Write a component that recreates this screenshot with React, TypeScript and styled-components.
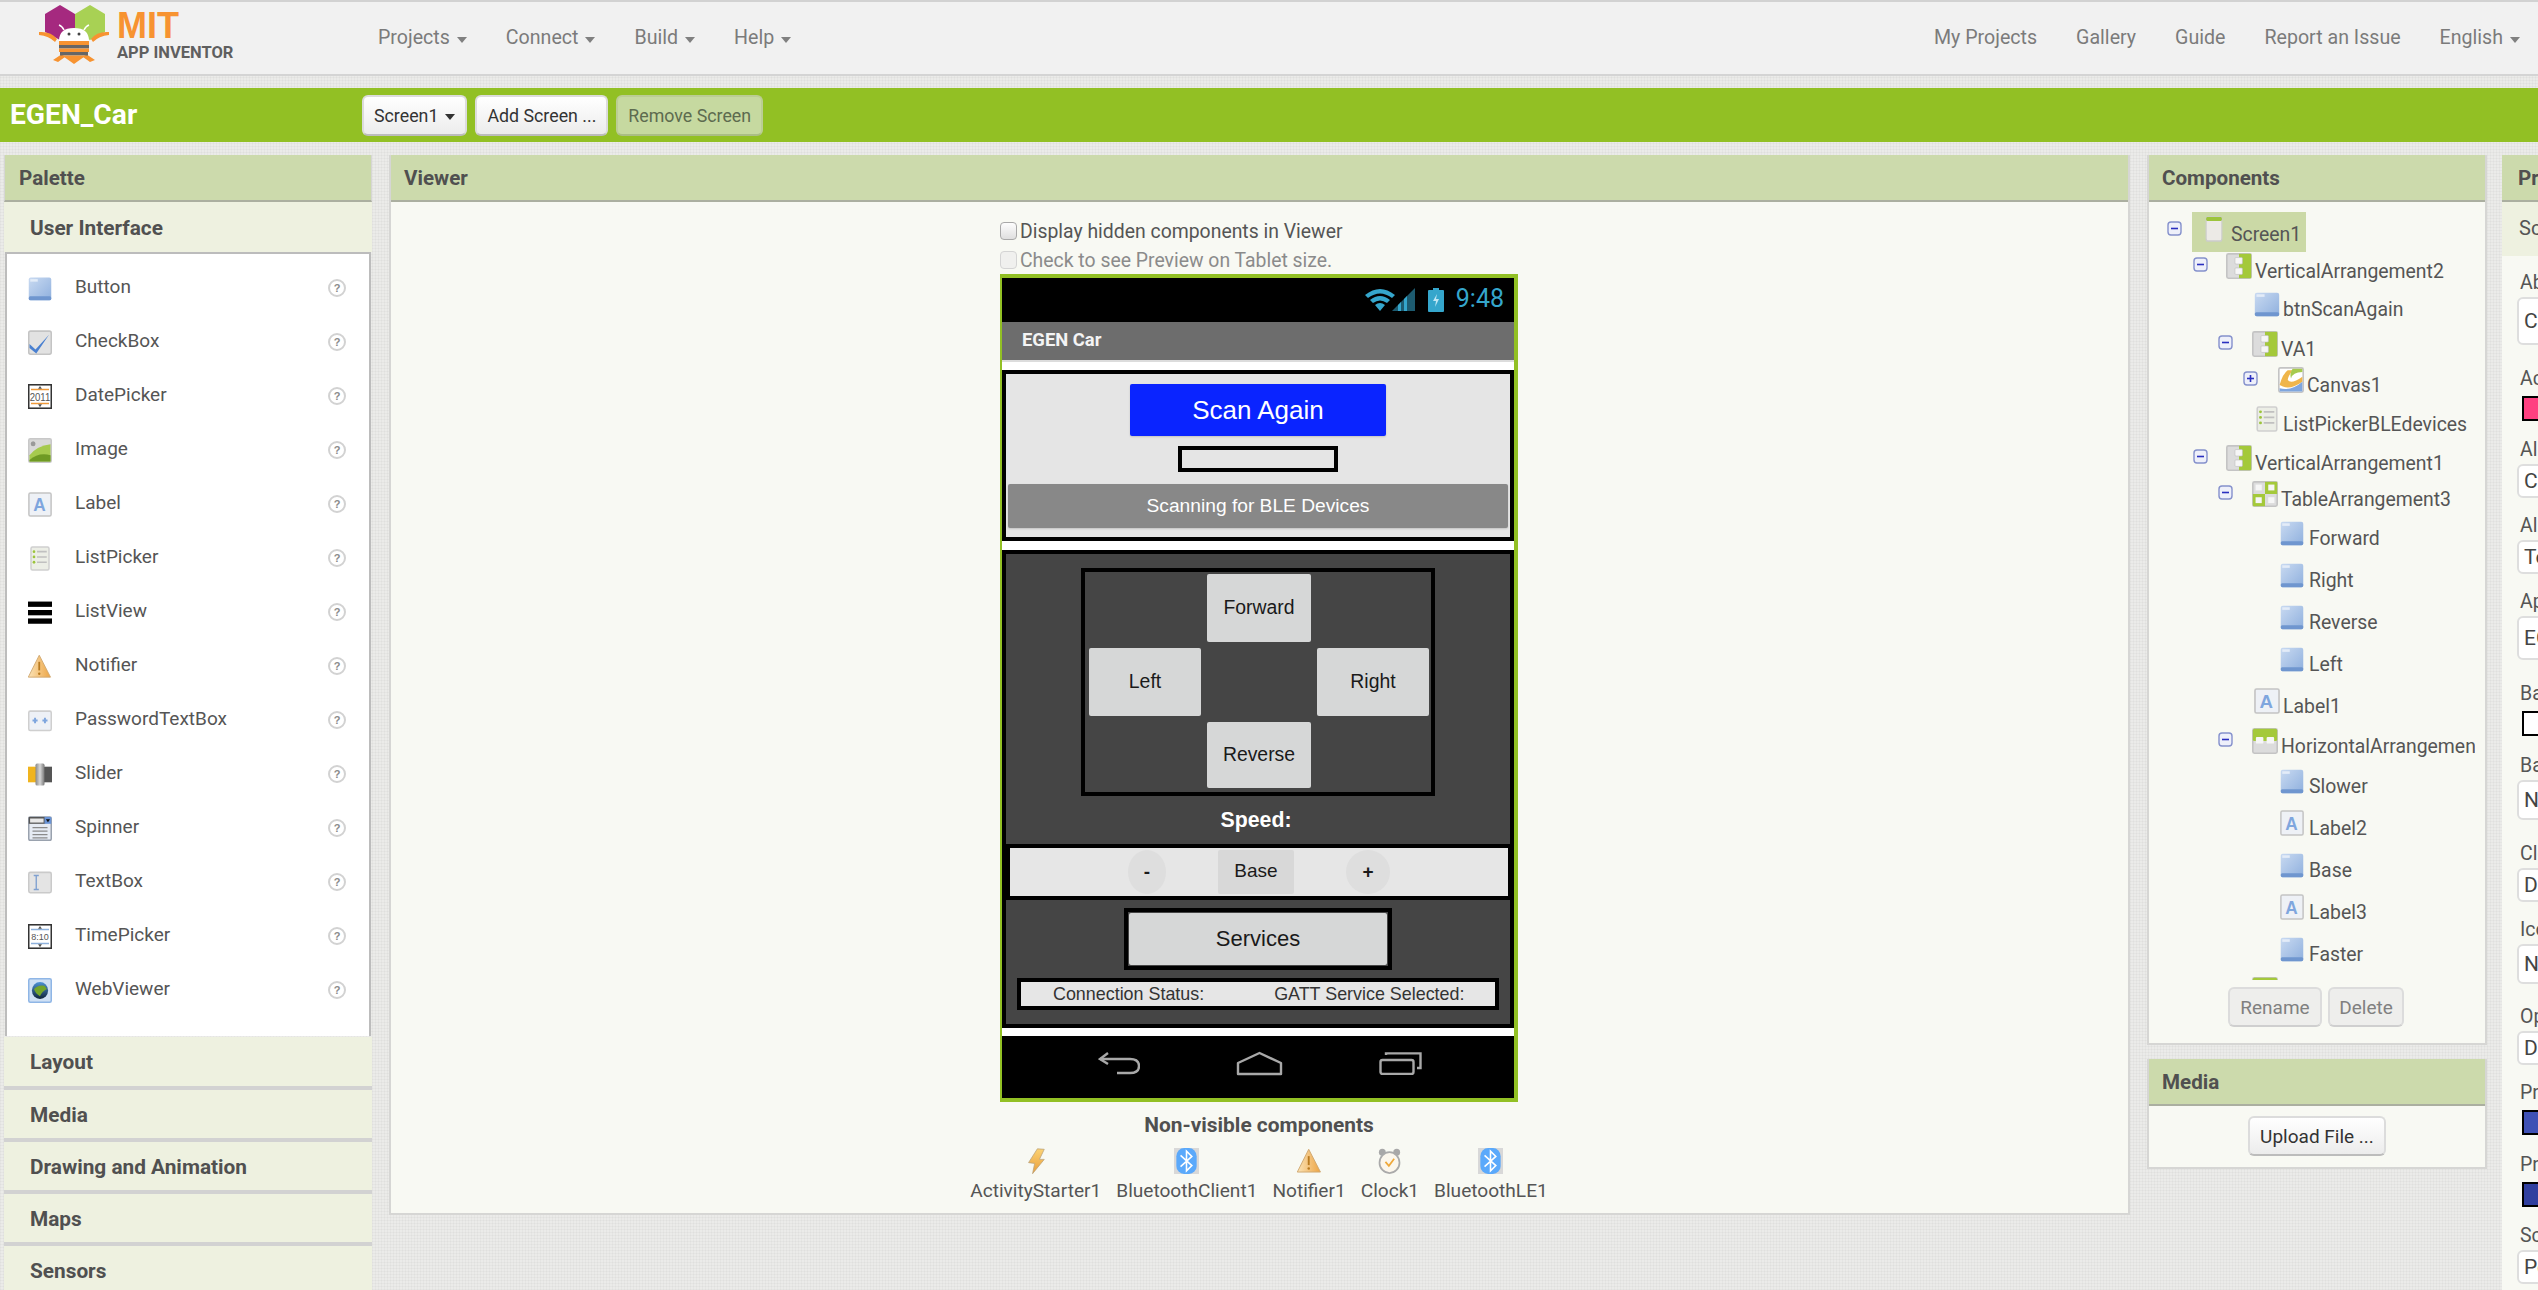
import React from "react";
import styled, { createGlobalStyle } from "styled-components";

const Global = createGlobalStyle`
  html, body { margin: 0; padding: 0; width: 2538px; height: 1290px; overflow: hidden; }
  body { font-family: Roboto, "Liberation Sans", sans-serif; color: #555; }
  *, *::before, *::after { box-sizing: border-box; }
`;

const Page = styled.div`
  width: 2538px; height: 1290px; overflow: hidden; display: flex; flex-direction: column;
  background-color: #ebebe9;
  background-image:
    repeating-linear-gradient(0deg, rgba(0,0,0,.028) 0 1px, transparent 1px 3px),
    repeating-linear-gradient(90deg, rgba(0,0,0,.028) 0 1px, transparent 1px 3px);
`;
const GradientDefs = styled.svg` position: absolute; width: 0; height: 0; `;

/* ---------- top bar ---------- */
const TopBar = styled.header`
  height: 76px; flex: none; display: flex; align-items: center; background: #f1f1f1;
  border-top: 2px solid #d2d2d2; border-bottom: 2px solid #d4d4d4; padding-left: 39px; padding-right: 18px;
`;
const Logo = styled.div` width: 339px; flex: none; display: flex; align-items: flex-start; height: 62px; margin-top: -6px; `;
const LogoWords = styled.div` margin-left: 8px; display: flex; flex-direction: column; `;
const LogoMit = styled.span`
  font: 700 36px/30px "Liberation Sans", sans-serif; color: #f79331; margin-top: 7px; height: 32px;
`;
const LogoApp = styled.span`
  font: 700 16.5px/18px Roboto, sans-serif; color: #5f5f5f; white-space: nowrap; margin-top: 1px;
`;
const NavGroup = styled.nav<{ $right?: boolean }>`
  display: flex; align-items: center; gap: 39px; margin-left: ${p => (p.$right ? "auto" : "0")};
`;
const NavItem = styled.span`
  font-size: 19.6px; color: #7b7b7b; display: flex; align-items: center; white-space: nowrap; line-height: 26px;
`;
const Caret = styled.i<{ $color?: string }>`
  display: inline-block; width: 0; height: 0; margin-left: 7px; margin-top: 3px;
  border-left: 5px solid transparent; border-right: 5px solid transparent; border-top: 6px solid ${p => p.$color || "#808080"};
`;

/* ---------- green project bar ---------- */
const ProjectBar = styled.div`
  height: 54px; flex: none; margin-top: 12px; background: #92c024; display: flex; align-items: center; padding-left: 10px;
`;
const ProjectTitle = styled.h1`
  margin: 0; width: 352px; font-size: 28.2px; font-weight: 700; color: #fff; line-height: 32px; white-space: nowrap;
`;
const BarButtons = styled.div` display: flex; gap: 8px; `;
const ToolButton = styled.button<{ $muted?: boolean }>`
  height: 41px; padding: 0 10px; font: 400 17.8px Roboto, sans-serif; border-radius: 6px; display: flex; align-items: center;
  border: 2px solid ${p => (p.$muted ? "#bbcd94" : "#dcdcdc")}; border-bottom-color: ${p => (p.$muted ? "#aabd85" : "#bcbcbc")};
  background: ${p => (p.$muted ? "#c6d9a0" : "linear-gradient(#ffffff, #ececec)")};
  color: ${p => (p.$muted ? "#5d6b4f" : "#333")};
`;

/* ---------- workspace columns ---------- */
const Workspace = styled.main`
  flex: 1; display: flex; align-items: flex-start; margin-top: 13px; padding-left: 4px; overflow: hidden; min-height: 0;
`;
const PaletteColumn = styled.section` width: 368px; flex: none; margin-right: 17px; `;
const ViewerColumn = styled.section` width: 1741px; height: 1060px; flex: none; margin-right: 17px; background: #f8f9f3; border: 2px solid #d6d6d4; border-top: none; `;
const SideColumn = styled.div` width: 340px; flex: none; margin-right: 15px; display: flex; flex-direction: column; gap: 14px; `;
const PropertiesColumn = styled.section` width: 400px; flex: none; height: 1160px; background: #f8f9f3; `;
const Panel = styled.section<{ $height: number }>`
  height: ${p => p.$height}px; background: #f8f9f3; border: 2px solid #d6d6d4; border-top: none; display: flex; flex-direction: column;
`;
const PanelHeader = styled.h2`
  margin: 0; height: 47px; flex: none; background: #ccdaac; border-bottom: 2px solid #abafa0; padding-left: 13px;
  font-size: 20.6px; font-weight: 700; color: #505050; line-height: 47px; white-space: nowrap;
`;
const PaletteHeader = styled(PanelHeader)` padding-left: 14px; border-left: 1px solid #d6d6d4; border-right: 1px solid #d6d6d4; `;
const PropertiesHeader = styled(PanelHeader)` padding-left: 16px; `;
const Drawer = styled.div<{ $open?: boolean }>`
  height: ${p => (p.$open ? 50 : 52)}px; background: #eef1e0; font-size: 20.8px; font-weight: 700; color: #505050;
  padding-left: 26px; line-height: ${p => (p.$open ? 53 : 51)}px; white-space: nowrap; border-bottom: ${p => (p.$open ? "0" : "4px solid #d2d2d2")};
`;
const FirstClosedDrawer = styled(Drawer)` margin-top: 1px; height: 53px; `;

const PaletteList = styled.div`
  width: 366px; height: 784px; margin: 0 auto; padding-top: 7px; background: #fff;
  border: 2px solid #bcbcbc; border-bottom: none;
`;
const PaletteRow = styled.div`
  height: 54px; display: flex; align-items: center; padding: 0 23px 0 21px; font-size: 19px; color: #555; line-height: 24px;
`;
const PaletteName = styled.span` margin-left: 23px; flex: 1; margin-top: -3px; `;
const HelpBadge = styled.span`
  width: 18px; height: 18px; border: 2px solid #d2d2d2; border-radius: 50%; font: 700 11px/14px "Liberation Sans", sans-serif;
  color: #8a8a8a; text-align: center; flex: none;
`;

/* ---------- viewer ---------- */
const ViewerBody = styled.div` display: flex; flex-direction: column; align-items: center; padding: 14px 1px 0 0; `;
const CheckRow = styled.label<{ $dim?: boolean; $h: number }>`
  width: 518px; height: ${p => p.$h}px; display: flex; align-items: center; font-size: 19.4px; white-space: nowrap;
  color: ${p => (p.$dim ? "#8b8b8b" : "#555")};
`;
const FakeCheck = styled.span<{ $dim?: boolean }>`
  width: 17px; height: 18px; margin-right: 3px; border-radius: 4px; flex: none;
  border: 1px solid ${p => (p.$dim ? "#d4d4d4" : "#a8a8a8")};
  background: ${p => (p.$dim ? "#f0f0ee" : "linear-gradient(#fdfdfd, #dfdfdf)")};
`;
const Phone = styled.div`
  width: 518px; height: 828px; flex: none; border: solid #92c024; border-width: 4px 4px 4px 2px; background: #fff;
  font-family: "Liberation Sans", Arial, sans-serif; display: flex; flex-direction: column;
`;
const StatusBar = styled.div` height: 44px; flex: none; background: #000; display: flex; align-items: center; justify-content: flex-end; padding-right: 10px; `;
const Clock = styled.span` font: 400 25px/28px Roboto, sans-serif; color: #35a6cc; margin: -3px 0 0 12px; `;
const PhoneTitle = styled.div`
  height: 40px; flex: none; background: #6d6d6d; border-bottom: 2px solid #dcdcdc; padding-left: 20px;
  font: 700 18.4px/36px Roboto, sans-serif; color: #f4f4f4;
`;
const Arrangement = styled.div<{ $dark?: boolean; $height: number; $top: number }>`
  height: ${p => p.$height}px; margin-top: ${p => p.$top}px; flex: none; border: 4px solid #000; display: flex; flex-direction: column; align-items: center;
  background: ${p => (p.$dark ? "#454545" : "#e5e5e5")};
`;
const ScanButton = styled.div`
  width: 256px; height: 52px; margin-top: 10px; background: #0a24ff; border-radius: 2px; color: #fff;
  font-size: 26px; display: flex; align-items: center; justify-content: center; box-shadow: 0 1px 2px rgba(0,0,0,.15);
`;
const EmptyLabel = styled.div` width: 160px; height: 26px; margin-top: 10px; border: 4px solid #000; `;
const StatusButton = styled.div`
  width: 500px; height: 44px; margin-top: 12px; background: #888; border-radius: 2px; color: #fff; font-size: 19.2px;
  display: flex; align-items: center; justify-content: center; box-shadow: 0 1px 2px rgba(0,0,0,.15);
`;
const ControlTable = styled.div`
  width: 354px; height: 228px; margin-top: 14px; border: 4px solid #000; padding: 2px 2px 4px 4px; flex: none;
  display: grid; grid-template-columns: 112px 104px 112px; grid-template-rows: 68px 68px 66px; column-gap: 6px; row-gap: 6px;
`;
const CarButton = styled.div<{ $col: number; $row: number }>`
  grid-column: ${p => p.$col}; grid-row: ${p => p.$row}; background: #d6d7d7; border-radius: 2px; color: #1a1a1a; font-size: 19.4px;
  display: flex; align-items: center; justify-content: center; padding-bottom: 2px;
`;
const SpeedTitle = styled.div`
  height: 48px; flex: none; display: flex; align-items: center; color: #fff; font-weight: 700; font-size: 21.3px; padding-right: 4px;
`;
const SpeedRow = styled.div`
  width: 504px; height: 56px; flex: none; border: solid #000; border-width: 4px 2px 4px 4px; background: #e6e6e6;
  display: flex; align-items: center; padding-left: 118px; gap: 52px;
`;
const RoundButton = styled.div<{ $w: number }>`
  width: ${p => p.$w}px; height: 44px; border-radius: 50%; background: #dedede; color: #1a1a1a; font-weight: 700; font-size: 19px;
  display: flex; align-items: center; justify-content: center;
`;
const BaseButton = styled.div`
  width: 76px; height: 44px; border-radius: 2px; background: #d8d8d8; color: #1a1a1a; font-size: 19px;
  display: flex; align-items: center; justify-content: center; padding-bottom: 3px;
`;
const ServicesFrame = styled.div` width: 268px; height: 62px; margin-top: 8px; border: 4px solid #000; padding: 1px; flex: none; `;
const ServicesButton = styled.div`
  height: 100%; background: #d6d7d7; border-radius: 2px; color: #1a1a1a; font-size: 22px;
  display: flex; align-items: center; justify-content: center;
`;
const ConnectionRow = styled.div`
  width: 482px; height: 32px; margin-top: 8px; flex: none; border: 4px solid #000; background: #e6e6e6; color: #333; font-size: 17.9px;
  display: flex; align-items: center; padding-left: 32px; gap: 70px; white-space: nowrap;
`;
const NavBar = styled.div`
  height: 62px; margin-top: 8px; flex: none; background: #000; display: flex; align-items: flex-start; padding: 15px 0 0 96px; gap: 96px;
`;
const HiddenTitle = styled.div` margin-top: 11px; font-size: 20.9px; font-weight: 700; color: #505050; line-height: 24px; `;
const HiddenRow = styled.div` display: flex; gap: 15px; margin-top: 11px; `;
const HiddenItem = styled.div` display: flex; flex-direction: column; align-items: center; font-size: 19.1px; color: #555; line-height: 24px; gap: 5px; white-space: nowrap; `;

/* ---------- components tree ---------- */
const TreeArea = styled.div` width: 326px; height: 778px; flex: none; overflow: hidden; padding-top: 10px; `;
const TreeRow = styled.div<{ $h: number; $indent: number }>`
  height: ${p => p.$h}px; padding-left: ${p => p.$indent}px; display: flex; align-items: flex-start; white-space: nowrap;
`;
const Toggle = styled.span<{ $slot: number; $top: number }>`
  width: ${p => p.$slot}px; flex: none; padding-top: ${p => p.$top}px; display: block; line-height: 0;
`;
const TreeName = styled.span<{ $gap: number }>` font-size: 19.4px; color: #555; line-height: 24px; margin-top: 7px; margin-left: ${p => p.$gap}px; `;
const Selected = styled.div`
  width: 114px; height: 40px; background: #cbd9a6; display: flex; align-items: flex-start; padding: 4px 0 0 13px;
`;
const PanelActions = styled.div` display: flex; justify-content: center; gap: 6px; margin-top: 7px; padding-right: 2px; `;
const GreyButton = styled.button<{ $w: number }>`
  width: ${p => p.$w}px; height: 40px; padding: 0; border-radius: 6px; font: 400 19px Roboto, sans-serif; color: #808080;
  background: #eeeeec; border: 2px solid #dcdcdc; border-bottom-color: #cfcfcf;
`;
const MediaBody = styled.div` display: flex; justify-content: center; padding-top: 10px; `;
const UploadButton = styled.button`
  width: 138px; height: 40px; border-radius: 6px; font: 400 19px Roboto, sans-serif; color: #333; white-space: nowrap; padding: 0;
  background: linear-gradient(#ffffff, #ececec); border: 2px solid #dcdcdc; border-bottom-color: #bcbcbc;
`;

/* ---------- properties ---------- */
const PropertySubHeader = styled.div`
  height: 54px; background: #eef1e0; padding-left: 17px; font-size: 20px; line-height: 52px; color: #555; white-space: nowrap;
`;
const PropertyList = styled.div` padding: 13px 0 0 15px; `;
const Property = styled.div<{ $after: number }>` margin-bottom: ${p => p.$after}px; `;
const PropertyLabel = styled.div<{ $swatch?: boolean }>`
  height: 28px; margin-bottom: ${p => (p.$swatch ? 3 : 0)}px; padding-left: 3px; font-size: 19.5px; line-height: 28px; color: #555; white-space: nowrap;
`;
const PropertyInput = styled.div<{ $h: number }>`
  width: 200px; height: ${p => p.$h}px; border: 2px solid #dedede; border-radius: 6px; background: #fff; padding-left: 5px;
  font-size: 21px; color: #444; display: flex; align-items: center; white-space: nowrap;
`;
const Swatch = styled.div<{ $color: string }>`
  width: 200px; height: 25px; margin-left: 5px; border: 2px solid #000; background: ${p => p.$color};
`;

/* ---------- drawings ---------- */
type Kind =
  | "button" | "checkbox" | "date" | "image" | "label" | "listpicker" | "listview" | "notifier" | "password"
  | "slider" | "spinner" | "textbox" | "time" | "web" | "screen" | "vertical" | "horizontal" | "table" | "canvas"
  | "lightning" | "bluetooth" | "clock";

const Icon: React.FC<{ kind: Kind; size?: number; h?: number }> = ({ kind, size = 24, h }) => {
  const shapes: Record<Kind, React.ReactNode> = {
    button: <>
      <rect x=".5" y="1" width="15" height="14.5" rx="1.3" fill="url(#gBtn)" />
      <rect x=".5" y="13" width="15" height="2.5" rx="1" fill="#6f96cf" />
      <rect x="1.5" y="2" width="5" height="1.6" fill="#e3ecf8" />
    </>,
    checkbox: <>
      <rect x=".5" y=".7" width="15" height="14.8" rx="1.2" fill="#e2e2e2" stroke="#c4c4c4" />
      <path d="M1 9 L5 12.5 L14 3 L5.5 15 L1 11.5 Z" fill="#4a80d0" />
    </>,
    date: <>
      <rect x=".5" y=".5" width="15" height="15" fill="#fff" stroke="#333" />
      <path d="M2 3.5h12M2 12.5h12" stroke="#ef9a3c" strokeWidth="1" />
      <path d="M8 1.2 L9.3 3 H6.7Z M8 14.8 L9.3 13 H6.7Z" fill="#555" />
      <text x="8" y="10.6" textAnchor="middle" fontSize="6.4" fontFamily="Liberation Sans, sans-serif" fill="#555">2011</text>
    </>,
    image: <>
      <rect x=".5" y=".5" width="15" height="15" rx="1" fill="#d9d9d9" stroke="#c8c8c8" />
      <circle cx="3.4" cy="3.6" r="1.6" fill="#9a9a9a" />
      <path d="M1 11 Q6 5 15 4 V15 H1Z" fill="#a6ca4e" />
      <path d="M1 14 Q7 9 15 11 V15 H1Z" fill="#6f9a24" />
    </>,
    label: <>
      <rect x=".6" y=".6" width="14.8" height="14.8" rx="1" fill="#eef1f6" stroke="#c4c4c4" />
      <text x="7.6" y="12.4" textAnchor="middle" fontSize="11.5" fontWeight="700" fontFamily="Liberation Sans, sans-serif" fill="#7fa6de">A</text>
    </>,
    listpicker: <>
      <rect x="2" y=".6" width="12" height="14.8" rx="1" fill="#eceee6" stroke="#cfcfcf" />
      <circle cx="4" cy="3.6" r=".9" fill="#9cc43c" /><circle cx="4" cy="7" r=".9" fill="#9cc43c" /><circle cx="4" cy="10.4" r=".9" fill="#9cc43c" />
      <path d="M6 3.6h6.5M6 7h6.5M6 10.4h6.5" stroke="#c0c0c0" strokeWidth="1" />
    </>,
    listview: <>
      <rect x="0" y="1" width="16" height="3.4" fill="#000" /><rect x="0" y="6.4" width="16" height="3.4" fill="#000" /><rect x="0" y="11.8" width="16" height="3.4" fill="#000" />
    </>,
    notifier: <>
      <path d="M7.5 .8 L15 14.8 H.2Z" fill="url(#gWarn)" stroke="#d0a870" strokeWidth=".6" />
      <path d="M7.5 5v5.5" stroke="#b87a20" strokeWidth="1.2" /><circle cx="7.5" cy="12.6" r=".8" fill="#b87a20" />
    </>,
    password: <>
      <rect x=".5" y="2" width="15" height="12.4" rx="1" fill="#eef1f6" stroke="#cfcfcf" />
      <path d="M3 8h3.4M4.7 6.3v3.4M9.6 8H13M11.3 6.3v3.4" stroke="#7fa6de" strokeWidth="1.3" />
    </>,
    slider: <>
      <rect x="0" y="3" width="6" height="10" fill="#f0b41e" /><rect x="10" y="3" width="6" height="10" fill="#555" />
      <rect x="5" y="1" width="6" height="14" rx="1" fill="url(#gKnob)" />
    </>,
    spinner: <>
      <rect x=".5" y=".6" width="15" height="15" rx="1" fill="#e6ebf3" stroke="#9aa2ae" />
      <rect x=".5" y=".6" width="11" height="4.4" fill="#555" />
      <rect x="1.4" y="1.6" width="9" height="2.6" fill="#e8e8e8" />
      <rect x="11" y=".6" width="4.5" height="4.4" fill="#6a94d6" />
      <path d="M11.9 2h2.8L13.3 4Z" fill="#111" />
      <path d="M3 7.5h10M3 9.7h10M3 11.9h10M3 14h10" stroke="#8a8a8a" strokeWidth=".8" />
    </>,
    textbox: <>
      <rect x=".5" y="1.5" width="15" height="13" rx="1" fill="#e4e4e4" stroke="#cacaca" />
      <path d="M3.8 3.5h3.4M3.8 12.5h3.4M5.5 3.5v9" stroke="#7fa0d0" strokeWidth=".9" />
    </>,
    time: <>
      <rect x=".5" y=".5" width="15" height="15" fill="#fff" stroke="#333" />
      <path d="M2 3.5h12M2 12.5h12" stroke="#8fb2dd" strokeWidth="1" />
      <path d="M8 1.2 L9.3 3 H6.7Z M8 14.8 L9.3 13 H6.7Z" fill="#555" />
      <text x="8" y="10.4" textAnchor="middle" fontSize="6" fontFamily="Liberation Sans, sans-serif" fill="#555">8:10</text>
    </>,
    web: <>
      <rect x=".5" y=".5" width="15" height="15" rx="1" fill="#cfe0f4" stroke="#8fb6e6" />
      <circle cx="8" cy="8" r="5.4" fill="url(#gGlobe)" />
      <path d="M4 7 Q7 4 11 5 L12.6 7 Q9 9 8 11.6 Q5 10 4 7Z" fill="#74a52a" />
    </>,
    screen: <>
      <rect x="1" y=".6" width="14" height="14.8" rx="1.4" fill="#eceae6" stroke="#cccccc" />
      <rect x="1" y=".6" width="14" height="2.4" rx="1" fill="#9cc43c" />
    </>,
    vertical: <>
      <rect x=".5" y=".5" width="15" height="15" rx="1" fill="#dcdcdc" stroke="#c4c4c4" />
      <rect x="8" y=".5" width="7.5" height="15" fill="#a4c93a" />
      <rect x="5.5" y="2.8" width="4.6" height="4" rx=".6" fill="#f6f6f6" stroke="#c0c0c0" strokeWidth=".4" />
      <rect x="5.5" y="9.2" width="4.6" height="4" rx=".6" fill="#f6f6f6" stroke="#c0c0c0" strokeWidth=".4" />
    </>,
    horizontal: <>
      <rect x=".5" y=".5" width="15" height="15" rx="1" fill="#dcdcdc" stroke="#c4c4c4" />
      <rect x=".5" y=".5" width="15" height="7.5" rx="1" fill="#a4c93a" />
      <rect x="2.4" y="5.6" width="4.6" height="4" rx=".6" fill="#f6f6f6" />
      <rect x="9" y="5.6" width="4.6" height="4" rx=".6" fill="#f6f6f6" />
    </>,
    table: <>
      <rect x=".5" y=".5" width="15" height="15" rx="1" fill="#dcdcdc" stroke="#c4c4c4" />
      <rect x="8" y=".5" width="7.5" height="7.5" fill="#a4c93a" /><rect x=".5" y="8" width="7.5" height="7.5" fill="#a4c93a" />
      <rect x="2.2" y="2.2" width="3.8" height="3.6" fill="#f6f6f6" /><rect x="10" y="2.2" width="3.8" height="3.6" fill="#f6f6f6" />
      <rect x="2.2" y="10" width="3.8" height="3.6" fill="#f6f6f6" /><rect x="10" y="10" width="3.8" height="3.6" fill="#f6f6f6" />
    </>,
    canvas: <>
      <rect x=".5" y=".5" width="15" height="15" rx="1" fill="#fff" stroke="#c4c4c4" />
      <path d="M1 11 Q3 4 6 2 H9 Q6 6 6 8 Q8 11 15 6 V9 Q8 14 3 12 Z" fill="#efb54a" />
      <path d="M9 1 H15 V3 Q9 3 8 7 Q7 4 9 1Z" fill="#a6ca4e" />
      <path d="M1 13 Q8 15 15 9 V15 H1Z" fill="#7fa6de" />
    </>,
    lightning: <>
      <path d="M9 .5 L14 .8 L10.5 7 L14 7 L5.5 15.8 L7 9.5 L2.6 9 Z" fill="url(#gBolt)" stroke="#b9a27a" strokeWidth=".5" />
    </>,
    bluetooth: <>
      <rect x="0" y="0" width="16" height="16" fill="#d8d8d8" />
      <rect x="1.5" y="0" width="13" height="16" rx="5" fill="#5aa9fb" />
      <path d="M4.2 4.6 L11.4 10.8 L8 14 V2 L11.4 5.2 L4.2 11.4" fill="none" stroke="#fff" strokeWidth="1" />
    </>,
    clock: <>
      <circle cx="3.4" cy="2.6" r="2.2" fill="#a8a8a8" /><circle cx="12.6" cy="2.6" r="2.2" fill="#a8a8a8" />
      <circle cx="8" cy="9" r="6.4" fill="#fbf6ec" stroke="#aaa" strokeWidth="1.1" />
      <path d="M5.4 8.6 L7.6 11 L11 6.6" fill="none" stroke="#efa83a" strokeWidth="1.1" />
    </>,
  };
  return <svg width={size} height={h ?? size} viewBox="0 0 16 16" preserveAspectRatio="none" style={{ flex: "none" }}>{shapes[kind]}</svg>;
};

const TreeSign: React.FC<{ plus?: boolean }> = ({ plus }) => (
  <svg width="15" height="15" viewBox="0 0 15 15">
    <rect x="1" y="1" width="13" height="13" rx="3" fill="#eef0fa" stroke="#8591cc" strokeWidth="1.4" />
    <path d="M4 7.5h7" stroke="#2a2fc0" strokeWidth="1.6" />
    {plus && <path d="M7.5 4v7" stroke="#2a2fc0" strokeWidth="1.6" />}
  </svg>
);

const Bee = () => (
  <svg width="70" height="60" viewBox="0 0 70 60" style={{ flex: "none" }}>
    <path d="M6 10 L21 1 L36 10 V28 L21 36 L6 28Z" fill="#a5297f" />
    <path d="M36 10 L51 1 L66 10 V28 L51 36 L36 28Z" fill="#a8d154" />
    <path d="M0 28 Q12 27 18 35 L16 38 Q10 32 0 31Z M70 28 Q58 27 52 35 L54 38 Q60 32 70 31Z" fill="#f79331" />
    <path d="M14 56 L23 50 L26 53 L19 58Z M56 56 L47 50 L44 53 L51 58Z" fill="#f79331" />
    <path d="M25 26 Q23 22 20 21 M45 26 Q47 22 50 21" stroke="#fff" strokeWidth="1.6" fill="none" />
    <path d="M20 37 Q20 24 35 24 Q50 24 50 37Z" fill="#fff" />
    <circle cx="30" cy="30" r="1.5" fill="#444" /><circle cx="40" cy="30" r="1.5" fill="#444" />
    <path d="M20 37 H50 L50 41 H20Z" fill="#f79331" />
    <rect x="20" y="41" width="30" height="3.5" fill="#666" />
    <rect x="20" y="44.5" width="30" height="3.5" fill="#f79331" />
    <rect x="21" y="48" width="28" height="3.5" fill="#666" />
    <path d="M23 51.5 H47 L35 60Z" fill="#f79331" />
  </svg>
);

const paletteItems: [string, Kind][] = [
  ["Button", "button"], ["CheckBox", "checkbox"], ["DatePicker", "date"], ["Image", "image"], ["Label", "label"],
  ["ListPicker", "listpicker"], ["ListView", "listview"], ["Notifier", "notifier"], ["PasswordTextBox", "password"],
  ["Slider", "slider"], ["Spinner", "spinner"], ["TextBox", "textbox"], ["TimePicker", "time"], ["WebViewer", "web"],
];

type Node = { name: string; kind: Kind; h: number; indent: number; slot: number; sign?: "minus" | "plus"; size?: number };
const tree: Node[] = [
  { name: "VerticalArrangement2", kind: "vertical", h: 38, indent: 44, slot: 33, sign: "minus" },
  { name: "btnScanAgain", kind: "button", h: 40, indent: 69, slot: 36 },
  { name: "VA1", kind: "vertical", h: 36, indent: 69, slot: 34, sign: "minus" },
  { name: "Canvas1", kind: "canvas", h: 39, indent: 94, slot: 35, sign: "plus" },
  { name: "ListPickerBLEdevices", kind: "listpicker", h: 39, indent: 69, slot: 36 },
  { name: "VerticalArrangement1", kind: "vertical", h: 36, indent: 44, slot: 33, sign: "minus" },
  { name: "TableArrangement3", kind: "table", h: 39, indent: 69, slot: 34, sign: "minus" },
  { name: "Forward", kind: "button", h: 42, indent: 94, slot: 37, size: 24 },
  { name: "Right", kind: "button", h: 42, indent: 94, slot: 37, size: 24 },
  { name: "Reverse", kind: "button", h: 42, indent: 94, slot: 37, size: 24 },
  { name: "Left", kind: "button", h: 42, indent: 94, slot: 37, size: 24 },
  { name: "Label1", kind: "label", h: 40, indent: 69, slot: 36 },
  { name: "HorizontalArrangemen", kind: "horizontal", h: 40, indent: 69, slot: 34, sign: "minus" },
  { name: "Slower", kind: "button", h: 42, indent: 94, slot: 37, size: 24 },
  { name: "Label2", kind: "label", h: 42, indent: 94, slot: 37, size: 24 },
  { name: "Base", kind: "button", h: 42, indent: 94, slot: 37, size: 24 },
  { name: "Label3", kind: "label", h: 42, indent: 94, slot: 37, size: 24 },
  { name: "Faster", kind: "button", h: 41, indent: 94, slot: 37, size: 24 },
  { name: "", kind: "horizontal", h: 40, indent: 69, slot: 34 },
];

type Prop = { label: string; value?: string; h?: number; color?: string; after: number };
const properties: Prop[] = [
  { label: "AboutScreen", value: "Controls", h: 48, after: 20 },
  { label: "AccentColor", color: "#ff4081", after: 15 },
  { label: "AlignHorizontal", value: "Center : 3", h: 34, after: 14 },
  { label: "AlignVertical", value: "Top : 1", h: 34, after: 14 },
  { label: "AppName", value: "EGEN_Car", h: 44, after: 20 },
  { label: "BackgroundColor", color: "#ffffff", after: 16 },
  { label: "BackgroundImage", value: "None...", h: 40, after: 20 },
  { label: "CloseScreenAnimation", value: "Default", h: 34, after: 14 },
  { label: "Icon", value: "None...", h: 40, after: 19 },
  { label: "OpenScreenAnimation", value: "Default", h: 34, after: 14 },
  { label: "PrimaryColor", color: "#3f51b5", after: 16 },
  { label: "PrimaryColorDark", color: "#303f9f", after: 15 },
  { label: "ScreenOrientation", value: "Portrait", h: 34, after: 14 },
];

const hiddenComponents: [string, Kind, number][] = [
  ["ActivityStarter1", "lightning", 22], ["BluetoothClient1", "bluetooth", 25], ["Notifier1", "notifier", 25],
  ["Clock1", "clock", 25], ["BluetoothLE1", "bluetooth", 25],
];

export default function App() {
  return (
    <Page>
      <Global />
      <GradientDefs aria-hidden="true">
        <defs>
          <linearGradient id="gBtn" x1="0" y1="0" x2="1" y2="1"><stop offset="0" stopColor="#c9daf1" /><stop offset="1" stopColor="#8fb0de" /></linearGradient>
          <linearGradient id="gWarn" x1="0" y1="0" x2="1" y2="0"><stop offset="0" stopColor="#fbe3b6" /><stop offset="1" stopColor="#eda545" /></linearGradient>
          <linearGradient id="gKnob" x1="0" y1="0" x2="1" y2="0"><stop offset="0" stopColor="#888" /><stop offset=".5" stopColor="#d6d6d6" /><stop offset="1" stopColor="#777" /></linearGradient>
          <linearGradient id="gGlobe" x1="0" y1="0" x2="0" y2="1"><stop offset="0" stopColor="#4f93d6" /><stop offset="1" stopColor="#10243a" /></linearGradient>
          <linearGradient id="gBolt" x1="0" y1="0" x2="0" y2="1"><stop offset="0" stopColor="#fbd274" /><stop offset="1" stopColor="#e99e3a" /></linearGradient>
        </defs>
      </GradientDefs>

      <TopBar>
        <Logo>
          <Bee />
          <LogoWords>
            <LogoMit>MIT</LogoMit>
            <LogoApp>APP INVENTOR</LogoApp>
          </LogoWords>
        </Logo>
        <NavGroup>
          {["Projects", "Connect", "Build", "Help"].map(n => <NavItem key={n}>{n}<Caret /></NavItem>)}
        </NavGroup>
        <NavGroup $right>
          <NavItem>My Projects</NavItem>
          <NavItem>Gallery</NavItem>
          <NavItem>Guide</NavItem>
          <NavItem>Report an Issue</NavItem>
          <NavItem>English<Caret /></NavItem>
        </NavGroup>
      </TopBar>

      <ProjectBar>
        <ProjectTitle>EGEN_Car</ProjectTitle>
        <BarButtons>
          <ToolButton>Screen1<Caret $color="#333" /></ToolButton>
          <ToolButton>Add Screen ...</ToolButton>
          <ToolButton $muted>Remove Screen</ToolButton>
        </BarButtons>
      </ProjectBar>

      <Workspace>
        <PaletteColumn>
          <PaletteHeader>Palette</PaletteHeader>
          <Drawer $open>User Interface</Drawer>
          <PaletteList>
            {paletteItems.map(([name, kind]) => (
              <PaletteRow key={name}>
                <Icon kind={kind} size={24} h={25} />
                <PaletteName>{name}</PaletteName>
                <HelpBadge>?</HelpBadge>
              </PaletteRow>
            ))}
          </PaletteList>
          <FirstClosedDrawer>Layout</FirstClosedDrawer>
          <Drawer>Media</Drawer>
          <Drawer>Drawing and Animation</Drawer>
          <Drawer>Maps</Drawer>
          <Drawer>Sensors</Drawer>
        </PaletteColumn>

        <ViewerColumn>
          <PanelHeader>Viewer</PanelHeader>
          <ViewerBody>
            <CheckRow $h={30}><FakeCheck />Display hidden components in Viewer</CheckRow>
            <CheckRow $h={28} $dim><FakeCheck $dim />Check to see Preview on Tablet size.</CheckRow>
            <Phone>
              <StatusBar>
                <svg width="50" height="24" viewBox="0 0 50 24">
                  <path d="M0 7 Q15 -5 30 7 L27 10 Q15 1 3 10Z M5 12 Q15 4 25 12 L22 15 Q15 10 8 15Z M10 17 Q15 13 20 17 L15 23Z" fill="#35a6cc" />
                  <path d="M27 23 L50 0 V23Z" fill="#35a6cc" opacity=".55" />
                  <path d="M33 23 V17 L36 14 V23Z M39 23 V11 L42 8 V23Z" fill="#35a6cc" />
                </svg>
                <svg width="16" height="24" viewBox="0 0 16 24" style={{ marginLeft: 13 }}>
                  <rect x="5" y="0" width="6" height="3" fill="#35a6cc" />
                  <rect x="0" y="2" width="16" height="22" rx="1" fill="#35a6cc" />
                  <path d="M9 6 L5 13 H8 L7 19 L11 11 H8Z" fill="#bfe6f3" />
                </svg>
                <Clock>9:48</Clock>
              </StatusBar>
              <PhoneTitle>EGEN Car</PhoneTitle>
              <Arrangement $height={171} $top={8}>
                <ScanButton>Scan Again</ScanButton>
                <EmptyLabel />
                <StatusButton>Scanning for BLE Devices</StatusButton>
              </Arrangement>
              <Arrangement $dark $height={478} $top={9}>
                <ControlTable>
                  <CarButton $col={2} $row={1}>Forward</CarButton>
                  <CarButton $col={1} $row={2}>Left</CarButton>
                  <CarButton $col={3} $row={2}>Right</CarButton>
                  <CarButton $col={2} $row={3}>Reverse</CarButton>
                </ControlTable>
                <SpeedTitle>Speed:</SpeedTitle>
                <SpeedRow>
                  <RoundButton $w={38}>-</RoundButton>
                  <BaseButton>Base</BaseButton>
                  <RoundButton $w={44}>+</RoundButton>
                </SpeedRow>
                <ServicesFrame><ServicesButton>Services</ServicesButton></ServicesFrame>
                <ConnectionRow><span>Connection Status:</span><span>GATT Service Selected:</span></ConnectionRow>
              </Arrangement>
              <NavBar>
                <svg width="42" height="24" viewBox="0 0 42 24" fill="none" stroke="#a8a8a8" strokeWidth="2.4">
                  <path d="M10 2 L2 8 L10 13" /><path d="M2 8 H32 Q41 8 41 15 Q41 22 32 22 H19" />
                </svg>
                <svg width="47" height="25" viewBox="0 0 47 25" fill="none" stroke="#a8a8a8" strokeWidth="2.4">
                  <path d="M2 23 V12 L23.5 2 L45 12 V23 Z" strokeLinejoin="round" />
                </svg>
                <svg width="43" height="24" viewBox="0 0 43 24" fill="none" stroke="#a8a8a8" strokeWidth="2.4">
                  <rect x="1.5" y="9" width="33" height="14" rx="2" /><path d="M7 4 V2.4 H41.5 V17 H38" />
                </svg>
              </NavBar>
            </Phone>
            <HiddenTitle>Non-visible components</HiddenTitle>
            <HiddenRow>
              {hiddenComponents.map(([name, kind, size], i) => (
                <HiddenItem key={name + i}>
                  <Icon kind={kind} size={size} h={26} />
                  <span>{name}</span>
                </HiddenItem>
              ))}
            </HiddenRow>
          </ViewerBody>
        </ViewerColumn>

        <SideColumn>
          <Panel $height={890}>
            <PanelHeader>Components</PanelHeader>
            <TreeArea>
              <TreeRow $h={41} $indent={18}>
                <Toggle $slot={25} $top={9}><TreeSign /></Toggle>
                <Selected>
                  <Icon kind="screen" size={18} h={26} />
                  <TreeName $gap={8}>Screen1</TreeName>
                </Selected>
              </TreeRow>
              {tree.map((n, i) => (
                <TreeRow key={i} $h={n.h} $indent={n.indent}>
                  <Toggle $slot={n.slot} $top={4}>{n.sign && <TreeSign plus={n.sign === "plus"} />}</Toggle>
                  <Icon kind={n.kind} size={n.size ?? 26} h={26} />
                  {n.name && <TreeName $gap={29 - (n.size ?? 26)}>{n.name}</TreeName>}
                </TreeRow>
              ))}
            </TreeArea>
            <PanelActions>
              <GreyButton $w={94}>Rename</GreyButton>
              <GreyButton $w={76}>Delete</GreyButton>
            </PanelActions>
          </Panel>
          <Panel $height={110}>
            <PanelHeader>Media</PanelHeader>
            <MediaBody><UploadButton>Upload File ...</UploadButton></MediaBody>
          </Panel>
        </SideColumn>

        <PropertiesColumn>
          <PropertiesHeader>Properties</PropertiesHeader>
          <PropertySubHeader>Screen1</PropertySubHeader>
          <PropertyList>
            {properties.map(p => (
              <Property key={p.label} $after={p.after}>
                <PropertyLabel $swatch={!!p.color}>{p.label}</PropertyLabel>
                {p.color ? <Swatch $color={p.color} /> : <PropertyInput $h={p.h!}>{p.value}</PropertyInput>}
              </Property>
            ))}
          </PropertyList>
        </PropertiesColumn>
      </Workspace>
    </Page>
  );
}
